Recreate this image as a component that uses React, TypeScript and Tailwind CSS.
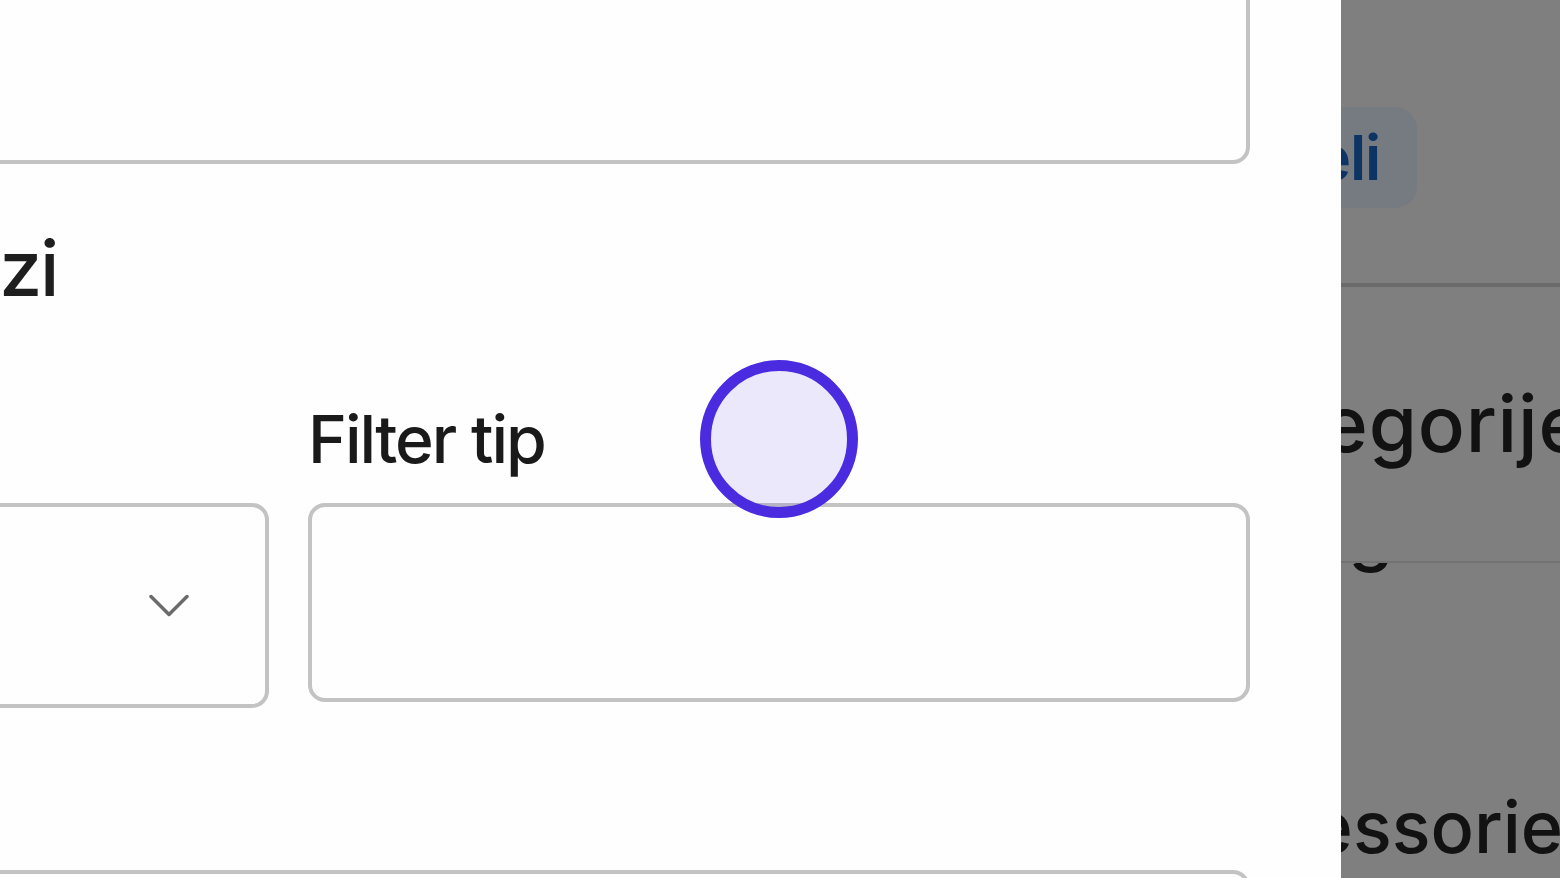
import React from "react";

function Chevron() {
  return (
    <svg width="40" height="24" viewBox="0 0 40 24" fill="none" className="shrink-0">
      <path d="M2 2.5 L20 20.5 L38 2.5" stroke="#6b6b6b" strokeWidth="3.5" strokeLinecap="round" strokeLinejoin="round" />
    </svg>
  );
}

function FormPanel() {
  return (
    <div className="w-[1341px] shrink-0 h-full bg-[#fefefe] overflow-hidden">
      <div className="ml-[-673px] w-[1923px]">
        <div className="-mt-[60px] h-[224px] rounded-[17px] border-[4px] border-[#c3c3c3]" />

        <div className="mt-[58px] w-[730px] text-right">
          <h3 className="text-[77px] leading-[92px] font-medium tracking-[-0.03em] text-[#1e1e1e]">Prikazi</h3>
        </div>

        <div className="mt-[85px] grid grid-cols-[942px_942px] gap-x-[39px] items-start">
          <div>
            <label className="block text-[66px] leading-[80px] font-medium tracking-[-0.03em] text-[#1a1a1a] mb-[24px]">Polje</label>
            <div className="h-[205px] rounded-[17px] border-[4px] border-[#c3c3c3] flex items-center justify-end pr-[76px]">
              <Chevron />
            </div>
          </div>
          <div>
            <label className="block text-[66px] leading-[80px] font-medium tracking-[-0.03em] text-[#1a1a1a] mb-[24px]">Filter tip</label>
            <div className="h-[199px] rounded-[17px] border-[4px] border-[#c3c3c3]" />
          </div>
        </div>

        <div className="mt-[162px] h-[200px] rounded-[17px] border-[4px] border-[#c3c3c3]" />
      </div>
    </div>
  );
}

function Backdrop() {
  return (
    <div className="flex-1 h-full bg-[#7f7f7f] overflow-hidden">
      <div className="-ml-[300px] w-[800px]">
        <div className="pt-[107px] w-[376px] flex justify-end">
          <span className="h-[101px] rounded-[22px] bg-[#767a81] pl-[30px] pr-[37px] flex items-center text-[62px] font-semibold tracking-[-0.02em] text-[#0d3463]">
            Modeli
          </span>
        </div>

        <div className="mt-[75px] h-[4px] bg-[#6b6b6b]" />

        <div className="mt-[93px] pl-[155px] text-[78px] leading-[88px] font-medium tracking-[0.01em] text-[#121212]">Kategorije</div>

        <div className="mt-[93px] h-[2px] bg-[#727272]" />
        <div className="h-[12px] overflow-hidden">
          <div className="-mt-[76px] pl-[290px] text-[73px] leading-[88px] font-medium tracking-[-0.035em] text-[#121212]">Igračke</div>
        </div>

        <div className="mt-[209px] pl-[136px] text-[72px] leading-[86px] font-medium text-[#121212]">Accessories</div>
      </div>
    </div>
  );
}

export default function App() {
  return (
    <div className="relative w-[1560px] h-[878px] overflow-hidden flex font-['Inter',sans-serif]">
      <FormPanel />
      <Backdrop />
      <div className="absolute left-[700px] top-[360px] w-[158px] h-[158px] rounded-full border-[11px] border-[#4a2be0] bg-[#4a2be0]/10" />
    </div>
  );
}
